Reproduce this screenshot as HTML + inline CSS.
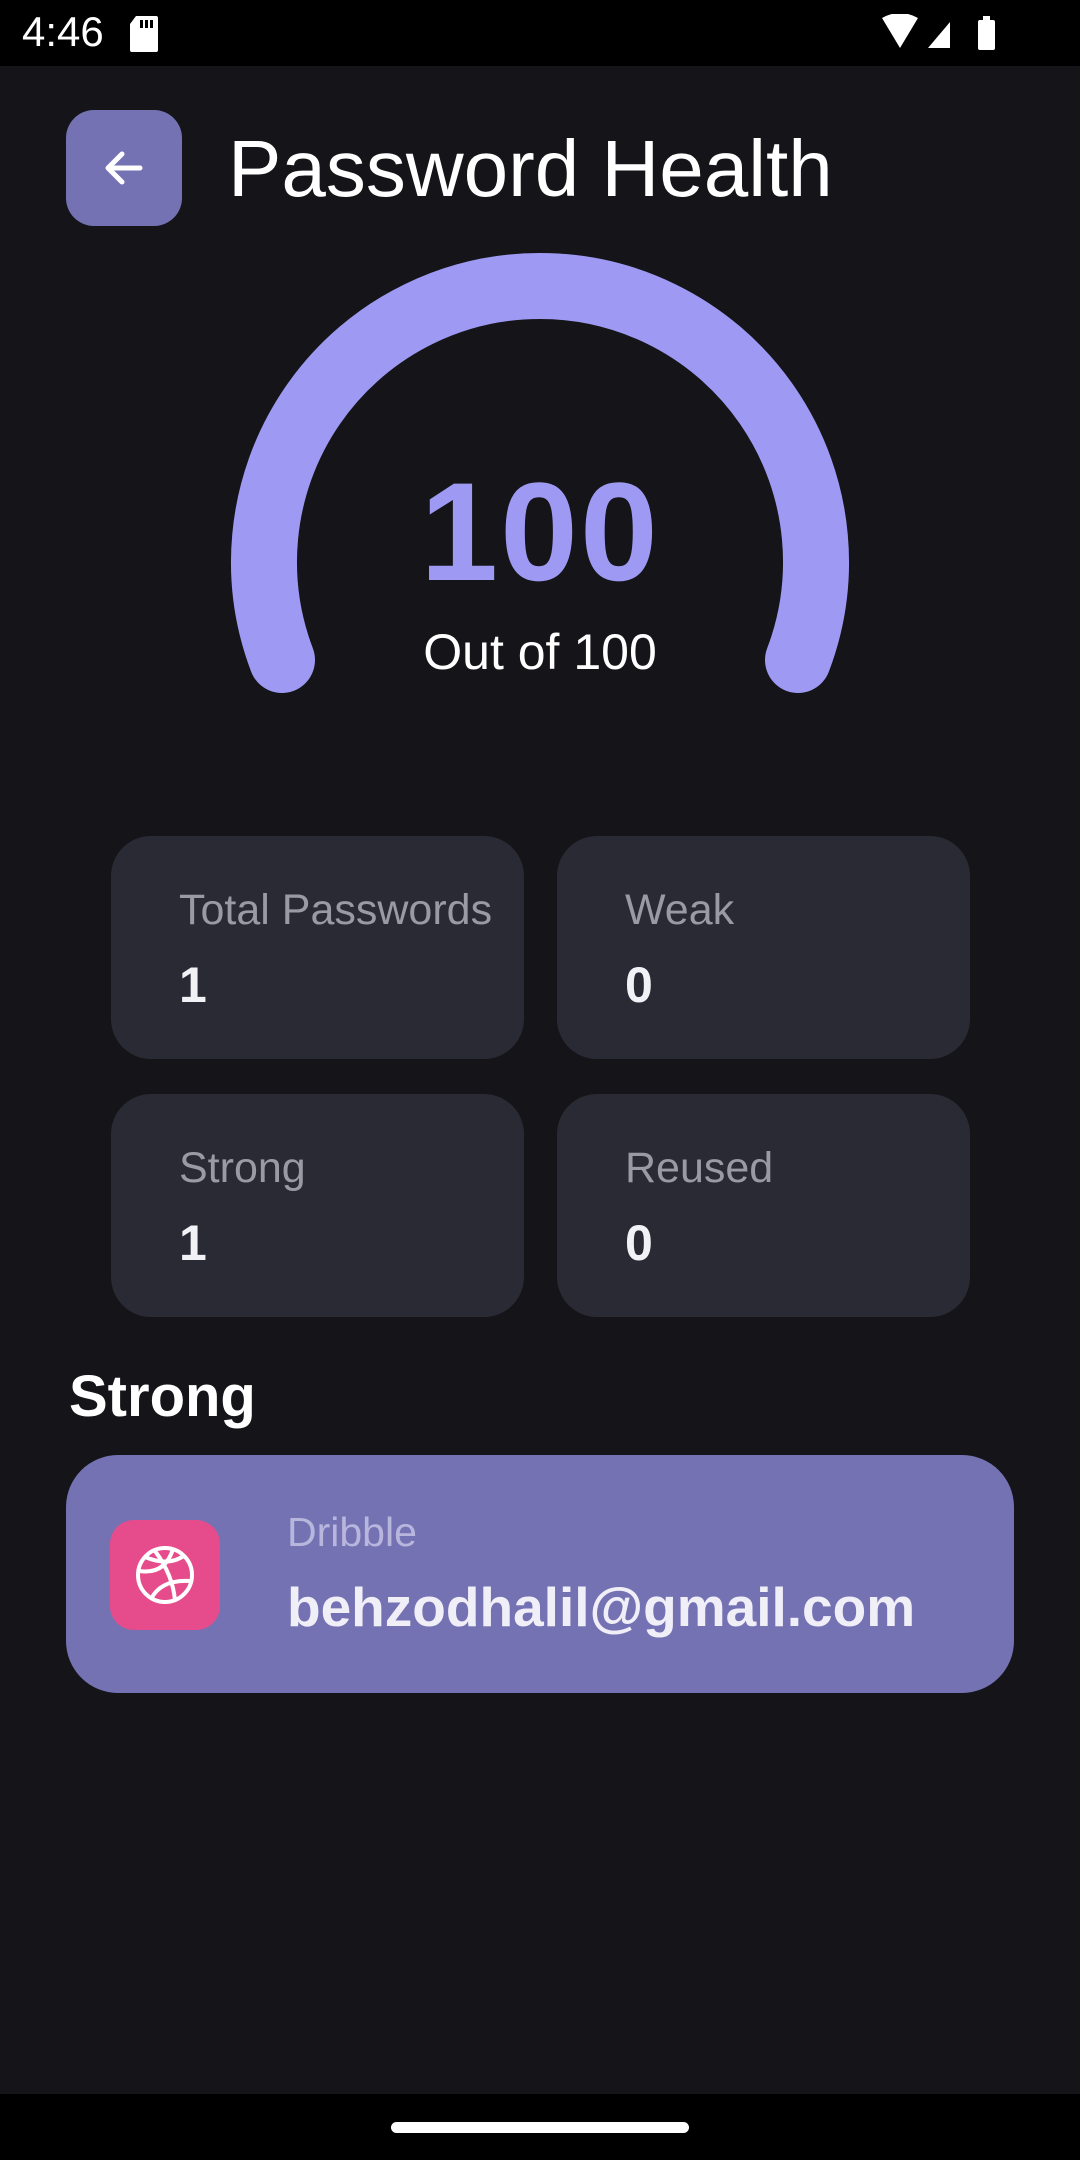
<!DOCTYPE html>
<html><head><meta charset="utf-8"><style>
*{margin:0;padding:0;box-sizing:border-box}
body{width:1080px;height:2160px;background:#141419;font-family:"Liberation Sans",sans-serif;position:relative;overflow:hidden;color:#fff}
.abs{position:absolute}
.card{position:absolute;background:#2a2a35;border-radius:40px;width:413px;height:223px}
.lbl{position:absolute;left:68px;top:50px;font-size:43px;color:#9a9aa3;white-space:nowrap}
.val{position:absolute;left:68px;top:120px;font-size:50px;font-weight:bold;color:#f2f2f6}
</style></head><body>
<div class="abs" style="left:0;top:0;width:1080px;height:66px;background:#000"></div>
<div class="abs" style="left:22px;top:8px;font-size:42px;color:#fff">4:46</div>
<svg class="abs" style="left:128px;top:16px" width="32" height="36" viewBox="0 0 32 36"><path d="M8 0H28a2 2 0 0 1 2 2V34a2 2 0 0 1-2 2H4a2 2 0 0 1-2-2V8Z" fill="#fff"/><rect x="12" y="4" width="3" height="8" fill="#000"/><rect x="17" y="4" width="3" height="8" fill="#000"/><rect x="22" y="4" width="3" height="8" fill="#000"/></svg>
<svg class="abs" style="left:880px;top:14px" width="120" height="38" viewBox="0 0 120 38"><path d="M2 4Q20-6 38 4L20 34Z" fill="#fff"/><path d="M48 34L70 8V34Z" fill="#fff"/><rect x="98" y="6" width="17" height="30" rx="2" fill="#fff"/><rect x="103" y="2" width="7" height="5" fill="#fff"/></svg>

<div class="abs" style="left:66px;top:110px;width:116px;height:116px;border-radius:28px;background:#7472b3"></div>
<svg class="abs" style="left:98px;top:142px" width="52" height="52" viewBox="0 0 52 52"><path d="M42 26H10M24 12L10 26L24 40" stroke="#fff" stroke-width="5" fill="none" stroke-linecap="round" stroke-linejoin="round"/></svg>
<div class="abs" style="left:228px;top:124px;font-size:80px;color:#fff;line-height:90px;white-space:nowrap">Password Health</div>

<svg class="abs" style="left:0;top:0" width="1080" height="800"><path d="M282 660A276 276 0 1 1 798 660" stroke="#9e9af3" stroke-width="66" fill="none" stroke-linecap="round"/></svg>
<div class="abs" style="left:0;width:1080px;top:462px;text-align:center;font-size:140px;font-weight:bold;color:#9e9af3;line-height:140px;letter-spacing:2px">100</div>
<div class="abs" style="left:0;width:1080px;top:622px;text-align:center;font-size:50px;color:#fff;line-height:60px">Out of 100</div>

<div class="card" style="left:111px;top:836px"><div class="lbl">Total Passwords</div><div class="val">1</div></div>
<div class="card" style="left:557px;top:836px"><div class="lbl">Weak</div><div class="val">0</div></div>
<div class="card" style="left:111px;top:1094px"><div class="lbl">Strong</div><div class="val">1</div></div>
<div class="card" style="left:557px;top:1094px"><div class="lbl">Reused</div><div class="val">0</div></div>

<div class="abs" style="left:69px;top:1364px;font-size:58px;font-weight:bold;color:#fff;line-height:66px">Strong</div>

<div class="abs" style="left:66px;top:1455px;width:948px;height:238px;border-radius:52px;background:#7472b3"></div>
<div class="abs" style="left:110px;top:1520px;width:110px;height:110px;border-radius:24px;background:#e64c8b"></div>
<svg class="abs" style="left:135px;top:1545px" width="60" height="60" viewBox="0 0 60 60" fill="none" stroke="#fff" stroke-width="4"><circle cx="30" cy="30" r="27"/><path d="M10 12Q34 22 50 10M4 26Q30 30 38 4M16 54Q26 34 56 36M20 6Q38 30 40 56"/></svg>
<div class="abs" style="left:287px;top:1508px;font-size:41px;color:#b8b6dc;line-height:48px">Dribble</div>
<div class="abs" style="left:287px;top:1575px;font-size:55px;font-weight:bold;color:#f0eff8;line-height:64px;white-space:nowrap">behzodhalil@gmail.com</div>

<div class="abs" style="left:0;top:2094px;width:1080px;height:66px;background:#000"></div>
<div class="abs" style="left:391px;top:2122px;width:298px;height:11px;border-radius:6px;background:#fff"></div>
</body></html>
